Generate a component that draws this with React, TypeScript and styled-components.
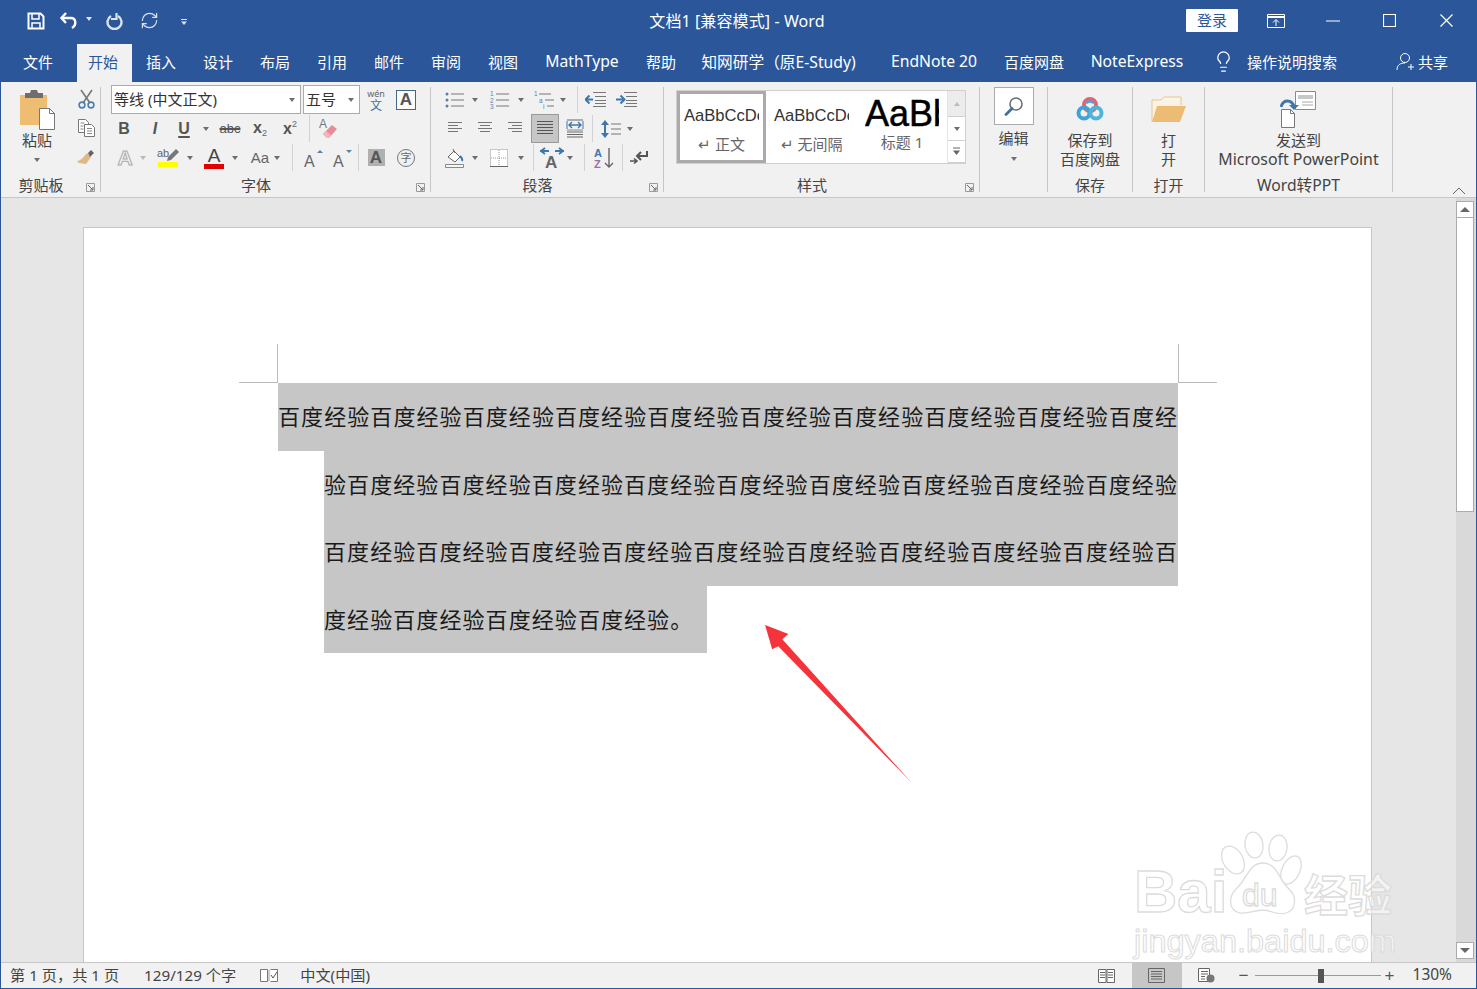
import React from "react";
import styled, { createGlobalStyle } from "styled-components";
import { Lightbulb, RefreshCw } from "lucide-react";

const Global = createGlobalStyle`
  html, body { margin: 0; padding: 0; background: #fff; }
  body { font-family: "Noto Sans", "Noto Sans CJK SC", sans-serif; overflow: hidden; }
  * { box-sizing: border-box; }
  svg { flex: none; }
`;

const BLUE = "#2b579a";
const SAGE = "#41719c";

const Win = styled.div`
  position: relative; width: 1477px; height: 989px; display: flex; flex-direction: column;
  border: 1px solid ${BLUE}; border-top: 0; overflow: hidden; background: #e6e6e6;
`;
const TitleBar = styled.header`
  height: 41px; flex: none; background: ${BLUE}; color: #fff; margin: 0 -1px;
  display: grid; grid-template-columns: 1fr auto 1fr; align-items: center;
`;
const Qat = styled.div`display: flex; align-items: center; height: 41px; padding-left: 27px;`;
const QatBtn = styled.span<{ $w: number; $ml?: number }>`
  width: ${p => p.$w}px; margin-left: ${p => p.$ml || 0}px; display: flex; justify-content: center; align-items: center;
`;
const Title = styled.div`font-size: 16px; color: #fff; white-space: nowrap; padding: 0 3px 2px 0; letter-spacing: 0.1px;`;
const WinCtl = styled.div`display: flex; align-items: center; justify-content: flex-end; height: 41px; padding-right: 2px;`;
const Login = styled.span`
  width: 52px; height: 23px; background: #fff; color: ${BLUE}; font-size: 15px; line-height: 23px; text-align: center;
  border-radius: 1px; margin-right: 9px;
`;
const CtlBtn = styled.span`width: 57px; display: flex; justify-content: center; align-items: center;`;

const TabBar = styled.nav`
  height: 41px; flex: none; background: ${BLUE}; margin: 0 -1px; padding-left: 23px;
  display: flex; align-items: stretch; color: #fff; font-size: 15px;
`;
const Tab = styled.span<{ $w: number; $mr?: number; $ml?: number; $size?: number; $active?: boolean }>`
  width: ${p => p.$w}px; margin-right: ${p => p.$mr ?? 27}px; margin-left: ${p => p.$ml || 0}px; white-space: nowrap; display: flex; align-items: center; justify-content: center;
  padding-bottom: 1px; ${p => p.$size ? `font-size:${p.$size}px;` : ""}
  ${p => p.$active ? `background:#f1f1f1;color:${BLUE};width:55px;margin:3px 14px 0 -11px;padding:0 3px 4px 0;` : ""}
`;
const TabIcon = styled.span<{ $w: number; $ml?: number }>`
  width: ${p => p.$w}px; margin-left: ${p => p.$ml || 0}px; display: flex; align-items: center; justify-content: center;
`;

const Ribbon = styled.section`
  height: 116px; flex: none; background: #f1f1f1; border-bottom: 1px solid #c6c6c6; display: flex; position: relative; color: #444; font-size: 15px;
`;
const Group = styled.div<{ $w: number }>`
  width: ${p => p.$w}px; flex: none; height: 105px; margin-top: 5px; border-right: 1px solid #c6c6c6; display: flex; flex-direction: column;
`;
const Body = styled.div`height: 91px; flex: none; display: flex; flex-direction: column;`;
const Foot = styled.div<{ $plain?: boolean }>`display: flex; align-items: center; height: 14px; flex: none; padding-right: ${p => p.$plain ? 0 : 5}px;`;
const FootLabel = styled.span<{ $size?: number }>`flex: 1; text-align: center; font-size: ${p => p.$size || 15}px; line-height: 14px; color: #444; white-space: nowrap; padding-bottom: 1px;`;
const Launcher = styled.span`width: 14px; display: flex; justify-content: flex-end; padding-top: 4px;`;

const ToolRow = styled.div<{ $first?: boolean; $pl?: number }>`
  height: 29px; flex: none; display: flex; align-items: center; margin-top: ${p => p.$first ? -2 : 0}px; padding-left: ${p => p.$pl || 0}px;
`;
const Tool = styled.span<{ $w: number; $ml?: number; $on?: boolean }>`
  width: ${p => p.$w}px; margin-left: ${p => p.$ml || 0}px; height: 29px; flex: none; display: flex; align-items: center; justify-content: center; position: relative;
  ${p => p.$on ? "background:#c6c6c6;border:1px solid #9a9a9a;" : ""}
`;
const Sep = styled.span<{ $ml?: number }>`width: 1px; height: 27px; background: #d2d2d2; margin-left: ${p => p.$ml || 0}px; flex: none;`;
const Caret = styled.i`
  display: block; width: 0; height: 0; border-left: 3.5px solid transparent; border-right: 3.5px solid transparent; border-top: 4px solid #6e6e6e;
`;
const Glyph = styled.span<{ $size?: number; $bold?: boolean; $italic?: boolean; $color?: string; $under?: boolean; $strike?: boolean }>`
  font-family: "Liberation Sans", Arial, sans-serif; font-size: ${p => p.$size || 16}px; line-height: 1;
  font-weight: ${p => p.$bold ? 700 : 400}; font-style: ${p => p.$italic ? "italic" : "normal"}; color: ${p => p.$color || "#555"};
  text-decoration: ${p => p.$under ? "underline" : p.$strike ? "line-through" : "none"};
  text-underline-offset: 2px; text-decoration-thickness: 2px;
`;
const Sub = styled.span<{ $sup?: boolean }>`font-size: 9px; font-weight: 400; vertical-align: ${p => p.$sup ? "7px" : "-3px"}; color: #666;`;
const OutlineA = styled(Glyph)`color: #f4f4f4; -webkit-text-stroke: 1px #aaa; font-weight: 700;`;
const ColorStack = styled.span`display: flex; flex-direction: column; align-items: center; gap: 0;`;
const Bar = styled.i<{ $c: string }>`display: block; width: 20px; height: 5px; background: ${p => p.$c}; margin-top: -1px;`;
const Shade = styled.span`width: 17px; height: 17px; background: #b0b0b0; display: flex; align-items: center; justify-content: center;`;
const Ring = styled.span`
  width: 18px; height: 18px; border: 1px solid #777; border-radius: 50%; font-size: 11px; line-height: 15px; text-align: center; color: #666;
  font-family: "Noto Sans CJK SC", sans-serif;
`;
const Wen = styled.span`display: flex; flex-direction: column; align-items: center; line-height: 1; color: ${SAGE}; gap: 1px;`;
const WenTop = styled.span`font-size: 9px; line-height: 9px; color: #666;`;
const WenBot = styled.span`font-size: 12px; line-height: 12px; font-family: "Noto Sans CJK SC", sans-serif;`;
const BoxA = styled.span`
  width: 20px; height: 20px; border: 1px solid #44668a; display: flex; align-items: center; justify-content: center; background: #fafafa;
`;
const Select = styled.span<{ $w: number; $ml?: number }>`
  width: ${p => p.$w}px; margin-left: ${p => p.$ml || 0}px; height: 29px; background: #fff; border: 1px solid #ababab; display: flex; align-items: center; justify-content: space-between;
  padding: 0 5px 3px 2px; font-size: 15px; color: #333; flex: none; white-space: nowrap;
`;
const SelCaret = styled(Caret)`margin-top: 3px;`;

const ClipRow = styled.div`display: flex; height: 91px;`;
const PasteCol = styled.div`width: 72px; display: flex; flex-direction: column; align-items: center; padding-top: 3px;`;
const PasteLabel = styled.span`font-size: 15px; line-height: 18px; color: #444;`;
const SmallCol = styled.div`width: 26px; margin-top: -1px; display: flex; flex-direction: column; align-items: center; gap: 3px;`;
const SmallIcon = styled.span`height: 26px; display: flex; align-items: center; justify-content: center;`;
const CaretRow = styled.span`height: 14px; display: flex; align-items: center; margin-top: 4px;`;

const Gallery = styled.div`
  margin: 3px 0 0 12px; width: 290px; height: 74px; background: #fff; border: 1px solid #d0d0d0; display: flex;
`;
const StyleItem = styled.div<{ $sel?: boolean; $w: number }>`
  width: ${p => p.$w}px; flex: none; display: flex; flex-direction: column; align-items: center; overflow: hidden;
  ${p => p.$sel ? "border: 3px solid #ababab; height: 72px; padding: 5px 4px 0;" : "padding: 8px 8px 0;"}
`;
const Preview = styled.div<{ $big?: boolean }>`
  font-family: "Liberation Sans", Arial, sans-serif; height: 34px; width: 100%; overflow: hidden; white-space: nowrap; color: ${p => p.$big ? "#000" : "#333"};
  font-size: ${p => p.$big ? 36 : 16.6}px; line-height: 34px; ${p => p.$big ? "margin-top:-2px; -webkit-text-stroke: 0.5px #000;" : ""}
`;
const StyleName = styled.div`font-size: 15px; color: #666; line-height: 18px; margin-top: 2px; white-space: nowrap;`;
const GalScroll = styled.div`width: 18px; flex: none; display: flex; flex-direction: column; border-left: 1px solid #e4e4e4; background: #f4f4f4;`;
const GalBtn = styled.span<{ $h: number; $bg?: string }>`
  height: ${p => p.$h}px; display: flex; align-items: center; justify-content: center; background: ${p => p.$bg || "#fff"}; border-bottom: 1px solid #d0d0d0;
`;

const BigCol = styled.div`display: flex; flex-direction: column; align-items: center; height: 91px;`;
const BigIcon = styled.div`height: 44px; flex: none; display: flex; align-items: center; justify-content: center;`;
const BigText = styled.div`font-size: 15px; line-height: 19px; color: #444; white-space: nowrap; text-align: center;`;
const Latin = styled.span`font-size: 15.9px;`;
const FindBtn = styled.div`
  width: 40px; height: 38px; background: #fff; border: 1px solid #ababab; display: flex; align-items: center; justify-content: center; flex: none;
`;
const FindLabel = styled(BigText)`margin-top: 4px;`;
const Collapse = styled.span`position: absolute; right: 10px; bottom: 2px; display: flex;`;

const DocArea = styled.main`flex: 1; min-height: 0; display: flex; background: #e6e6e6;`;
const Canvas = styled.div`flex: 1; min-width: 0; overflow: hidden; padding: 29px 84px 0 82px;`;
const Page = styled.article`
  background: #fff; border: 1px solid #c6c6c6; border-bottom: 0; height: 100%; padding: 116px 0 0 155px;
`;
const CropRow = styled.div`display: grid; grid-template-columns: 39px 900px 39px; height: 39px;`;
const CropL = styled.i`display: block; border-right: 1px solid #bbb; border-bottom: 1px solid #bbb;`;
const CropR = styled.i`display: block; border-left: 1px solid #bbb; border-bottom: 1px solid #bbb;`;
const TextBlock = styled.div`
  margin-left: 39px; width: 900px; font-family: "Noto Sans CJK SC", sans-serif; font-size: 22px; color: #1a1a1a; letter-spacing: 1.08px;
`;
const Line = styled.div<{ $indent?: boolean; $w?: number }>`
  height: 67.5px; line-height: 64px; background: #c6c6c6; white-space: nowrap; overflow: hidden;
  margin-left: ${p => p.$indent ? 46 : 0}px; ${p => p.$w ? `width:${p.$w}px;` : ""}
`;
const VScroll = styled.div`width: 20px; flex: none; background: #d9d9d9; display: flex; flex-direction: column; padding: 3px 2px 3px 0;`;
const SBtn = styled.span`height: 17px; flex: none; background: #fff; border: 1px solid #ababab; display: flex; align-items: center; justify-content: center;`;
const Thumb = styled.span`height: 294px; background: #fff; border: 1px solid #ababab; border-top: 0; flex: none;`;
const Track = styled.span`flex: 1;`;
const SCaret = styled.i<{ $up?: boolean }>`
  display: block; width: 0; height: 0; border-left: 5px solid transparent; border-right: 5px solid transparent;
  ${p => p.$up ? "border-bottom: 5px solid #666;" : "border-top: 5px solid #666;"}
`;

const Status = styled.footer`
  height: 26px; flex: none; background: #f1f1f1; border-top: 1px solid #c6c6c6; display: flex; align-items: center; font-size: 15.2px; color: #444; padding-left: 9px;
`;
const StatusText = styled.span<{ $ml?: number }>`margin-left: ${p => p.$ml || 0}px; white-space: nowrap; padding-bottom: 3px;`;
const StatusIcon = styled.span<{ $ml?: number }>`margin-left: ${p => p.$ml || 0}px; display: flex;`;
const StatusRight = styled.div`margin-left: auto; display: flex; align-items: center; height: 100%; padding-right: 24px;`;
const ViewBtn = styled.span<{ $on?: boolean; $w: number }>`
  width: ${p => p.$w}px; height: 100%; display: flex; align-items: center; justify-content: center; ${p => p.$on ? "background:#c6c6c6;" : ""}
`;
const ZoomLine = styled.span`width: 126px; height: 1px; background: #999; margin: 0 2px 0 4px; display: flex; justify-content: center; align-items: center;`;
const ZoomThumb = styled.i`display: block; width: 6px; height: 14px; background: #555; margin-left: 6px;`;
const ZoomSign = styled.span<{ $ml?: number }>`width: 14px; margin-left: ${p => p.$ml || 0}px; text-align: center; font-size: 17px; line-height: 1; color: #555; font-family: "Liberation Sans", sans-serif;`;
const Pct = styled.span`margin-left: 16px; font-size: 15.5px; color: #444; padding-bottom: 3px;`;

const Overlay = styled.svg<{ $l: number; $t: number }>`
  position: absolute; left: ${p => p.$l}px; top: ${p => p.$t}px; pointer-events: none; overflow: visible;
`;

/* icons */
const Lines = ({ rows, color = "#777", w = 18 }: { rows: [number, number][]; color?: string; w?: number }) => (
  <svg width={w} height={rows.length * 3 + 1} viewBox={`0 0 ${w} ${rows.length * 3 + 1}`}>
    {rows.map(([a, b], i) => <line key={i} x1={a} x2={b} y1={i * 3 + 0.5} y2={i * 3 + 0.5} stroke={color} />)}
  </svg>
);
const I = ({ w, h = w, children }: { w: number; h?: number; children: React.ReactNode }) => (
  <svg width={w} height={h} viewBox={`0 0 ${w} ${h}`}>{children}</svg>
);
const LaunchIcon = () => (
  <I w={9}><path d="M.5.5h8v8h-8z" fill="none" stroke="#9a9a9a" /><path d="M2 2l5 5M7 4v3H4" fill="none" stroke="#666" /></I>
);
const Bullets = () => (
  <I w={20} h={18}><g fill="#5a7fa8"><circle cx="2" cy="3" r="1.5" /><circle cx="2" cy="9" r="1.5" /><circle cx="2" cy="15" r="1.5" /></g>
    <path d="M6 3h13M6 9h13M6 15h13" stroke="#777" /></I>
);
const Numbers = () => (
  <I w={20} h={20}><g fontSize="6.5" fill="#5a7fa8" fontFamily="Liberation Sans"><text x="0" y="6">1</text><text x="0" y="12.5">2</text><text x="0" y="19">3</text></g>
    <path d="M6 4h13M6 10h13M6 16h13" stroke="#777" /></I>
);
const Multi = () => (
  <I w={22} h={20}><g fontSize="6.5" fill="#5a7fa8" fontFamily="Liberation Sans"><text x="0" y="6">1</text><text x="5" y="13">a</text><text x="9" y="19">i</text></g>
    <path d="M5 4h12M11 10h9M13 16h7" stroke="#777" /></I>
);
const Outdent = () => (
  <I w={21} h={17}><path d="M8 1.5h13M10 5.5h11M10 9.5h11M10 12.5h11M8 15.5h13" stroke="#777" /><path d="M8 8.5H1M4.5 4.5l-4 4 4 4" fill="none" stroke="#3f77ad" strokeWidth="2" /></I>
);
const Indent = () => (
  <I w={21} h={17}><path d="M8 1.5h13M10 5.5h11M10 9.5h11M10 12.5h11M8 15.5h13" stroke="#777" /><path d="M0 8.5h7M4.5 4.5l4 4-4 4" fill="none" stroke="#3f77ad" strokeWidth="2" /></I>
);
const Distribute = () => (
  <I w={18} h={20}><path d="M1 1h16M1 13h16M1 15.5h16M1 18h16" stroke="#666" /><path d="M1 2v8M17 2v8" stroke="#3f77ad" /><path d="M3 6h12M6 3L3 6l3 3M12 3l3 3-3 3" fill="none" stroke="#3f77ad" strokeWidth="1.4" /><path d="M1 11h16" stroke="#888" /></I>
);
const Spacing = () => (
  <I w={20} h={20}><path d="M4 1l4 5H5v8h3l-4 5-4-5h3V6H0z" fill="#3f77ad" /><path d="M10 5h10M10 10h10M10 15h10" stroke="#777" /></I>
);
const Shading = () => (
  <I w={20} h={20}><path d="M3 9l6-6 6 6-5 5z" fill="#fff" stroke="#666" /><path d="M8 1l2 4" stroke="#666" /><path d="M15 8c2 2 3 3 2 5" fill="none" stroke="#3f77ad" strokeWidth="2" /><path d="M.5 16.5h18v3H.5z" fill="#f6f6f6" stroke="#888" /></I>
);
const Borders = () => (
  <I w={18}><path d="M.5.5h17v17H.5z" fill="#fff" stroke="#999" strokeDasharray="1 1" /><path d="M9 1v16M1 9h16" stroke="#999" strokeDasharray="1 1" /><path d="M0 17.5h18" stroke="#666" /></I>
);
const Asian = () => (
  <I w={26} h={26}><path d="M1 6h9M6 3L2 6l4 3M16 6h9M20 3l4 3-4 3" fill="none" stroke="#3f77ad" strokeWidth="1.8" /><text x="6" y="23" fontSize="17" fontWeight="700" fill="#666" fontFamily="Liberation Sans">A</text></I>
);
const Sort = () => (
  <I w={20} h={24}><text x="0" y="11" fontSize="11" fontWeight="700" fill="#3f77ad" fontFamily="Liberation Sans">A</text><text x="0" y="22" fontSize="11" fontWeight="700" fill="#9b6fa5" fontFamily="Liberation Sans">Z</text><path d="M15 2v19M11 17l4 4 4-4" fill="none" stroke="#666" strokeWidth="1.4" /></I>
);
const PilcrowMark = () => (
  <I w={18} h={15}><path d="M17 1v5H8M11 2L7 6l4 4" fill="none" stroke="#555" strokeWidth="2" /><path d="M0 11h6M4 8.5l3 2.5-3 2.5" fill="none" stroke="#555" strokeWidth="1.6" /></I>
);
const Eraser = () => (
  <I w={22} h={24}><text x="0" y="11" fontSize="12" fill="#777" fontFamily="Liberation Sans">A</text><path d="M4 17l9-9 5 4-8 9H8z" fill="#e98a96" /><path d="M4 17l3-3 5 4-2 3H8z" fill="#f3b4bc" /></I>
);
const Highlight = () => (
  <I w={22} h={15}><text x="0" y="9" fontSize="11" fill="#666" fontFamily="Liberation Sans">ab</text><path d="M10 13l1-4 8-8 3 3-8 8z" fill="#777" /></I>
);
const Grow = ({ up }: { up?: boolean }) => (
  <I w={20} h={24}><text x="1" y="21" fontSize="16" fill="#666" fontFamily="Liberation Sans">A</text><path d={up ? "M14 7l3-3 3 3z" : "M14 4l3 3 3-3z"} fill="#5a7fa8" /></I>
);
const Paste = () => (
  <I w={36} h={41}>
    <path d="M1 5h27v30H1z" fill="#eebd72" />
    <path d="M6 3h5l1-3h6l1 3h5v5H6z" fill="#6e6e6e" />
    <path d="M20.5 18.5h10l5 5v16h-15z" fill="#fff" stroke="#777" /><path d="M30.5 18.5v5h5" fill="none" stroke="#777" />
  </I>
);
const Scissors = () => (
  <I w={17} h={20}><path d="M3 1l9 13M14 1L5 14" stroke="#777" strokeWidth="1.6" /><circle cx="4" cy="16" r="2.9" fill="none" stroke="#4d7fad" strokeWidth="1.6" /><circle cx="13" cy="16" r="2.9" fill="none" stroke="#4d7fad" strokeWidth="1.6" /></I>
);
const CopyIc = () => (
  <I w={17} h={18}><path d="M.5.5h7l3 3v10H.5z" fill="#fff" stroke="#777" /><path d="M6.5 5.5h7l3 3v9h-10z" fill="#fff" stroke="#777" /><path d="M2.5 4h4M2.5 7h3M2.5 10h3M9 9.5h5M9 12h5M9 14.5h5" stroke="#888" /></I>
);
const Painter = () => (
  <I w={18} h={16}><path d="M10 4l4 4-5 7-7-1-2-2c3 0 6-3 10-8z" fill="#dcb985" /><path d="M11 4l3-3 3 3-3 3-1 1z" fill="#666" /></I>
);
const Search = () => (
  <I w={20}><circle cx="12" cy="8" r="6" fill="none" stroke="#6f6f6f" strokeWidth="1.6" /><path d="M8 12.5l-6 6" stroke="#41719c" strokeWidth="2.8" strokeLinecap="round" /></I>
);
const Cloud = () => (
  <I w={28} h={26}>
    <circle cx="14" cy="9" r="6" fill="none" stroke="#e8626b" strokeWidth="4" />
    <circle cx="8" cy="17" r="5.5" fill="none" stroke="#3fa3d8" strokeWidth="4" />
    <circle cx="20" cy="17" r="5.5" fill="none" stroke="#4fb4d9" strokeWidth="4" />
    <path d="M10 7a6 6 0 0 1 8 0" fill="none" stroke="#5d9bd5" strokeWidth="3" />
  </I>
);
const Folder = () => (
  <I w={36} h={27}>
    <path d="M1 26V4l9 0 3-3h17v8" fill="#fbf4e6" stroke="#e8c48f" />
    <path d="M1 26l5-16h29l-6 16z" fill="#ecbc75" />
  </I>
);
const SendPpt = () => (
  <I w={38} h={37}>
    <path d="M15.5.5h20v18h-20z" fill="#fff" stroke="#8a8a8a" />
    <path d="M18 4h15v4H18z" fill="#c8c8c8" /><path d="M22 11h11M22 14h11" stroke="#aaa" />
    <path d="M1 16c2-8 11-8 13 0" fill="none" stroke="#3f77ad" strokeWidth="3" />
    <path d="M9 14l5 5 5-5z" fill="#3f77ad" />
    <path d="M1.5 18.5h9l4 4v14h-13z" fill="#fff" stroke="#777" /><path d="M10.5 18.5v4h4" fill="none" stroke="#777" />
  </I>
);

const unit = "百度经验";
const l1 = unit.repeat(9) + "百度经";
const l2 = "验" + unit.repeat(9);
const l3 = unit.repeat(9) + "百";
const l4 = "度经验" + unit.repeat(3) + "。";

const tabs: { t: string; w: number; mr?: number; size?: number }[] = [
  { t: "插入", w: 30 }, { t: "设计", w: 30 }, { t: "布局", w: 30 }, { t: "引用", w: 30 }, { t: "邮件", w: 30 }, { t: "审阅", w: 30 }, { t: "视图", w: 30 },
  { t: "MathType", w: 74, size: 15.7 }, { t: "帮助", w: 30, mr: 26 }, { t: "知网研学（原E-Study)", w: 153, mr: 36, size: 15.7 },
  { t: "EndNote 20", w: 86, size: 15.7 }, { t: "百度网盘", w: 60 }, { t: "NoteExpress", w: 92, mr: 0, size: 15.7 },
];

export default function App() {
  return (
    <Win>
      <Global />
      <TitleBar>
        <Qat>
          <QatBtn $w={18}>
            <I w={18}><path d="M1.5 1.5h12l3 3v12h-15z" fill="none" stroke="#fff" strokeWidth="2" /><path d="M5 2v5h7V2M5 16v-5h8v5" fill="none" stroke="#fff" strokeWidth="1.5" /></I>
          </QatBtn>
          <QatBtn $w={22} $ml={13}>
            <I w={20}><path d="M7 2L2.5 7 7 12" fill="none" stroke="#fff" strokeWidth="2.4" /><path d="M3 7h9c5 0 6 7 1 10" fill="none" stroke="#fff" strokeWidth="2.4" /></I>
          </QatBtn>
          <QatBtn $w={8} $ml={5}><Caret style={{ borderTopColor: "#dfe6f0", marginTop: -3 }} /></QatBtn>
          <QatBtn $w={20} $ml={11}>
            <I w={18}><path d="M6 4a7 7 0 1 0 7 0" fill="none" stroke="#dbe3ef" strokeWidth="2.4" /><path d="M11.5 1v6H6" fill="none" stroke="#dbe3ef" strokeWidth="2.2" /></I>
          </QatBtn>
          <QatBtn $w={20} $ml={15}><RefreshCw size={19} color="#dbe3ef" strokeWidth={1.5} /></QatBtn>
          <QatBtn $w={10} $ml={20}>
            <I w={8}><path d="M1 2.5h6" stroke="#dbe3ef" /><path d="M1 4.5h6L4 8z" fill="#dbe3ef" /></I>
          </QatBtn>
        </Qat>
        <Title>文档1 [兼容模式] - Word</Title>
        <WinCtl>
          <Login>登录</Login>
          <CtlBtn>
            <I w={18} h={14}><path d="M.5.5h17v13H.5z" fill="none" stroke="#fff" /><path d="M1 3h16" stroke="#fff" strokeWidth="2" /><path d="M9 12V6M6 8.5l3-3 3 3" fill="none" stroke="#fff" /></I>
          </CtlBtn>
          <CtlBtn><I w={14} h={2}><path d="M0 1h14" stroke="#fff" /></I></CtlBtn>
          <CtlBtn><I w={13}><path d="M.5.5h12v12H.5z" fill="none" stroke="#fff" strokeWidth="1.2" /></I></CtlBtn>
          <CtlBtn><I w={13}><path d="M.5.5l12 12M12.5.5l-12 12" stroke="#fff" strokeWidth="1.2" /></I></CtlBtn>
        </WinCtl>
      </TitleBar>

      <TabBar>
        <Tab $w={30} $mr={35}>文件</Tab>
        <Tab $w={30} $active>开始</Tab>
        {tabs.map(({ t, w, mr, size }) => <Tab key={t} $w={w} $mr={mr} $size={size}>{t}</Tab>)}
        <TabIcon $w={22} $ml={29}><Lightbulb size={23} color="#fff" strokeWidth={1.3} /></TabIcon>
        <Tab $w={90} $mr={0} $ml={13}>操作说明搜索</Tab>
        <TabIcon $w={20} $ml={59}>
          <I w={20}><circle cx="9" cy="6" r="4.5" fill="none" stroke="#fff" /><path d="M1 18c0-5 3-7 8-7M12 15h6M15 12v6" fill="none" stroke="#fff" /></I>
        </TabIcon>
        <Tab $w={30} $mr={0} $ml={2}>共享</Tab>
      </TabBar>

      <Ribbon>
        <Group $w={100}>
          <Body>
            <ClipRow>
              <PasteCol>
                <Paste />
                <PasteLabel>粘贴</PasteLabel>
                <CaretRow><Caret /></CaretRow>
              </PasteCol>
              <SmallCol>
                <SmallIcon><Scissors /></SmallIcon>
                <SmallIcon><CopyIc /></SmallIcon>
                <SmallIcon><Painter /></SmallIcon>
              </SmallCol>
            </ClipRow>
          </Body>
          <Foot><FootLabel>剪贴板</FootLabel><Launcher><LaunchIcon /></Launcher></Foot>
        </Group>

        <Group $w={330}>
          <Body>
            <ToolRow $first $pl={10}>
              <Select $w={190}>等线 (中文正文)<SelCaret /></Select>
              <Select $w={57} $ml={2}>五号<SelCaret /></Select>
              <Tool $w={24} $ml={4}><Wen><WenTop>wén</WenTop><WenBot>文</WenBot></Wen></Tool>
              <Tool $w={26} $ml={5}><BoxA><Glyph $size={17} $bold>A</Glyph></BoxA></Tool>
            </ToolRow>
            <ToolRow $pl={10}>
              <Tool $w={26}><Glyph $bold>B</Glyph></Tool>
              <Tool $w={36}><Glyph $bold $italic>I</Glyph></Tool>
              <Tool $w={22}><Glyph $bold $under>U</Glyph></Tool>
              <Tool $w={22}><Caret /></Tool>
              <Tool $w={26}><Glyph $size={13} $strike>abc</Glyph></Tool>
              <Tool $w={34}><Glyph $bold>x<Sub>2</Sub></Glyph></Tool>
              <Tool $w={26}><Glyph $bold>x<Sub $sup>2</Sub></Glyph></Tool>
              <Sep $ml={6} />
              <Tool $w={26} $ml={7}><Eraser /></Tool>
            </ToolRow>
            <ToolRow $pl={10}>
              <Tool $w={28}><OutlineA $size={21}>A</OutlineA></Tool>
              <Tool $w={8}><Caret style={{ borderTopColor: "#bbb" }} /></Tool>
              <Tool $w={26} $ml={8}><ColorStack><Highlight /><Bar $c="#ffff00" /></ColorStack></Tool>
              <Tool $w={10} $ml={4}><Caret /></Tool>
              <Tool $w={24} $ml={7}><ColorStack><Glyph $size={19} $color="#444">A</Glyph><Bar $c="#e00000" /></ColorStack></Tool>
              <Tool $w={10} $ml={4}><Caret /></Tool>
              <Tool $w={26} $ml={7}><Glyph $size={15} $color="#666">Aa</Glyph></Tool>
              <Tool $w={8}><Caret /></Tool>
              <Sep $ml={11} />
              <Tool $w={22} $ml={9}><Grow up /></Tool>
              <Tool $w={22} $ml={7}><Grow /></Tool>
              <Sep $ml={5} />
              <Tool $w={24} $ml={5}><Shade><Glyph $size={17} $bold $color="#555">A</Glyph></Shade></Tool>
              <Tool $w={24} $ml={6}><Ring>字</Ring></Tool>
            </ToolRow>
          </Body>
          <Foot><FootLabel>字体</FootLabel><Launcher><LaunchIcon /></Launcher></Foot>
        </Group>

        <Group $w={233}>
          <Body>
            <ToolRow $first>
              <Tool $w={24} $ml={12}><Bullets /></Tool>
              <Tool $w={10} $ml={3}><Caret /></Tool>
              <Tool $w={24} $ml={8}><Numbers /></Tool>
              <Tool $w={10} $ml={4}><Caret /></Tool>
              <Tool $w={24} $ml={7}><Multi /></Tool>
              <Tool $w={8} $ml={2}><Caret /></Tool>
              <Sep $ml={10} />
              <Tool $w={24} $ml={5}><Outdent /></Tool>
              <Tool $w={24} $ml={7}><Indent /></Tool>
            </ToolRow>
            <ToolRow>
              <Tool $w={24} $ml={12}><Lines w={16} rows={[[1, 15], [1, 11], [1, 15], [1, 11]]} /></Tool>
              <Tool $w={24} $ml={6}><Lines w={16} rows={[[1, 15], [3, 13], [1, 15], [3, 13]]} /></Tool>
              <Tool $w={24} $ml={6}><Lines w={16} rows={[[1, 15], [5, 15], [1, 15], [5, 15]]} /></Tool>
              <Tool $w={28} $ml={4} $on><Lines w={18} rows={[[1, 17], [1, 17], [1, 17], [1, 17], [1, 17]]} color="#555" /></Tool>
              <Tool $w={24} $ml={4}><Distribute /></Tool>
              <Sep $ml={5} />
              <Tool $w={24} $ml={6}><Spacing /></Tool>
              <Tool $w={10} $ml={2}><Caret /></Tool>
            </ToolRow>
            <ToolRow>
              <Tool $w={24} $ml={12}><Shading /></Tool>
              <Tool $w={10} $ml={3}><Caret /></Tool>
              <Tool $w={24} $ml={7}><Borders /></Tool>
              <Tool $w={10} $ml={5}><Caret /></Tool>
              <Sep $ml={7} />
              <Tool $w={28} $ml={4}><Asian /></Tool>
              <Tool $w={8}><Caret /></Tool>
              <Sep $ml={10} />
              <Tool $w={24} $ml={7}><Sort /></Tool>
              <Sep $ml={6} />
              <Tool $w={24} $ml={4}><PilcrowMark /></Tool>
            </ToolRow>
          </Body>
          <Foot><FootLabel>段落</FootLabel><Launcher><LaunchIcon /></Launcher></Foot>
        </Group>

        <Group $w={316}>
          <Body>
            <Gallery>
              <StyleItem $sel $w={89}><Preview>AaBbCcDc</Preview><StyleName>↵ 正文</StyleName></StyleItem>
              <StyleItem $w={91}><Preview>AaBbCcDc</Preview><StyleName>↵ 无间隔</StyleName></StyleItem>
              <StyleItem $w={90}><Preview $big>AaBb</Preview><StyleName>标题 1</StyleName></StyleItem>
              <GalScroll>
                <GalBtn $h={26} $bg="#ececec"><Caret style={{ transform: "rotate(180deg)", borderTopColor: "#bbb" }} /></GalBtn>
                <GalBtn $h={24}><Caret /></GalBtn>
                <GalBtn $h={22}>
                  <I w={9} h={9}><path d="M1 1h7" stroke="#666" /><path d="M1 3.5h7L4.5 8z" fill="#666" /></I>
                </GalBtn>
              </GalScroll>
            </Gallery>
          </Body>
          <Foot><FootLabel>样式</FootLabel><Launcher><LaunchIcon /></Launcher></Foot>
        </Group>

        <Group $w={68}>
          <Body>
            <BigCol>
              <FindBtn><Search /></FindBtn>
              <FindLabel>编辑</FindLabel>
              <CaretRow><Caret /></CaretRow>
            </BigCol>
          </Body>
        </Group>

        <Group $w={85}>
          <Body>
            <BigCol>
              <BigIcon><Cloud /></BigIcon>
              <BigText>保存到<br />百度网盘</BigText>
            </BigCol>
          </Body>
          <Foot $plain><FootLabel>保存</FootLabel></Foot>
        </Group>

        <Group $w={72}>
          <Body>
            <BigCol>
              <BigIcon><Folder /></BigIcon>
              <BigText>打<br />开</BigText>
            </BigCol>
          </Body>
          <Foot $plain><FootLabel>打开</FootLabel></Foot>
        </Group>

        <Group $w={188}>
          <Body>
            <BigCol>
              <BigIcon><SendPpt /></BigIcon>
              <BigText>发送到<br /><Latin>Microsoft PowerPoint</Latin></BigText>
            </BigCol>
          </Body>
          <Foot $plain><FootLabel $size={15.7}>Word转PPT</FootLabel></Foot>
        </Group>

        <Collapse><I w={14} h={8}><path d="M1 7l6-6 6 6" fill="none" stroke="#666" /></I></Collapse>
      </Ribbon>

      <DocArea>
        <Canvas>
          <Page>
            <CropRow><CropL /><span /><CropR /></CropRow>
            <TextBlock>
              <Line>{l1}</Line>
              <Line $indent>{l2}</Line>
              <Line $indent>{l3}</Line>
              <Line $indent $w={383}>{l4}</Line>
            </TextBlock>
          </Page>
        </Canvas>
        <VScroll>
          <SBtn><SCaret $up /></SBtn>
          <Thumb />
          <Track />
          <SBtn><SCaret /></SBtn>
        </VScroll>
      </DocArea>

      <Status>
        <StatusText>第 1 页，共 1 页</StatusText>
        <StatusText $ml={25}>129/129 个字</StatusText>
        <StatusIcon $ml={24}>
          <I w={18} h={15}><path d="M.5 1.5h7v12h-7zM10.5 1.5h7v12h-7" fill="#fff" stroke="#777" /><path d="M9 13V2" stroke="#aaa" /><path d="M11 7l2 3 4-6" fill="none" stroke="#555" /></I>
        </StatusIcon>
        <StatusText $ml={22}>中文(中国)</StatusText>
        <StatusRight>
          <ViewBtn $w={50}>
            <I w={17} h={14}><path d="M.5.5H8v13H.5zM9 .5h7.5v13H9z" fill="#fff" stroke="#666" /><path d="M2 3.5h5M2 6h5M2 8.5h5M10 3.5h5M10 6h5M10 8.5h5" stroke="#666" /></I>
          </ViewBtn>
          <ViewBtn $w={50} $on>
            <I w={17} h={15}><path d="M.5.5h16v14H.5z" fill="none" stroke="#666" /><path d="M3 3.5h11M3 6h11M3 8.5h11M3 11h11" stroke="#666" /></I>
          </ViewBtn>
          <ViewBtn $w={50}>
            <I w={17} h={15}><path d="M.5.5h11v13H.5z" fill="#fff" stroke="#666" /><path d="M3 3.5h7M3 6h7M3 8.5h4M3 11h4" stroke="#666" /><circle cx="12.5" cy="10.5" r="4" fill="#777" /></I>
          </ViewBtn>
          <ZoomSign $ml={5}>−</ZoomSign>
          <ZoomLine><ZoomThumb /></ZoomLine>
          <ZoomSign>+</ZoomSign>
          <Pct>130%</Pct>
        </StatusRight>
      </Status>

      <Overlay $l={764} $t={625} width={148} height={158} viewBox="765 626 146 156">
        <polygon points="765,626 788,635 782,640 910,782 778,647 772,650" fill="#f5333a" />
      </Overlay>
      <Overlay $l={1130} $t={835} width={270} height={125} viewBox="0 0 270 125" fill="rgba(255,255,255,.55)" stroke="#dcdcdc" strokeWidth="1.3">
        <text x="3" y="77" fontSize="60" fontWeight="700" fontFamily="Liberation Sans">Bai</text>
        <ellipse cx="102" cy="25" rx="10" ry="15" transform="rotate(-30 102 25)" />
        <ellipse cx="123" cy="10" rx="9" ry="13" transform="rotate(-8 123 10)" />
        <ellipse cx="147" cy="13" rx="9" ry="13" transform="rotate(8 147 13)" />
        <ellipse cx="160" cy="35" rx="9" ry="15" transform="rotate(25 160 35)" />
        <path d="M132 28c14 0 15 15 25 25 10 9 8 22-2 25-10 3-14-3-23-3s-18 6-26 2c-9-4-8-17 0-24 10-9 12-25 26-25z" />
        <text x="111" y="71" fontSize="32" fontFamily="Liberation Sans">du</text>
        <text x="173" y="77" fontSize="44" fontWeight="700" fontFamily="'Noto Sans CJK SC'">经验</text>
        <text x="3" y="117" fontSize="31" fontFamily="Liberation Sans" textLength="262" lengthAdjust="spacingAndGlyphs" strokeWidth="1">jingyan.baidu.com</text>
      </Overlay>
    </Win>
  );
}
